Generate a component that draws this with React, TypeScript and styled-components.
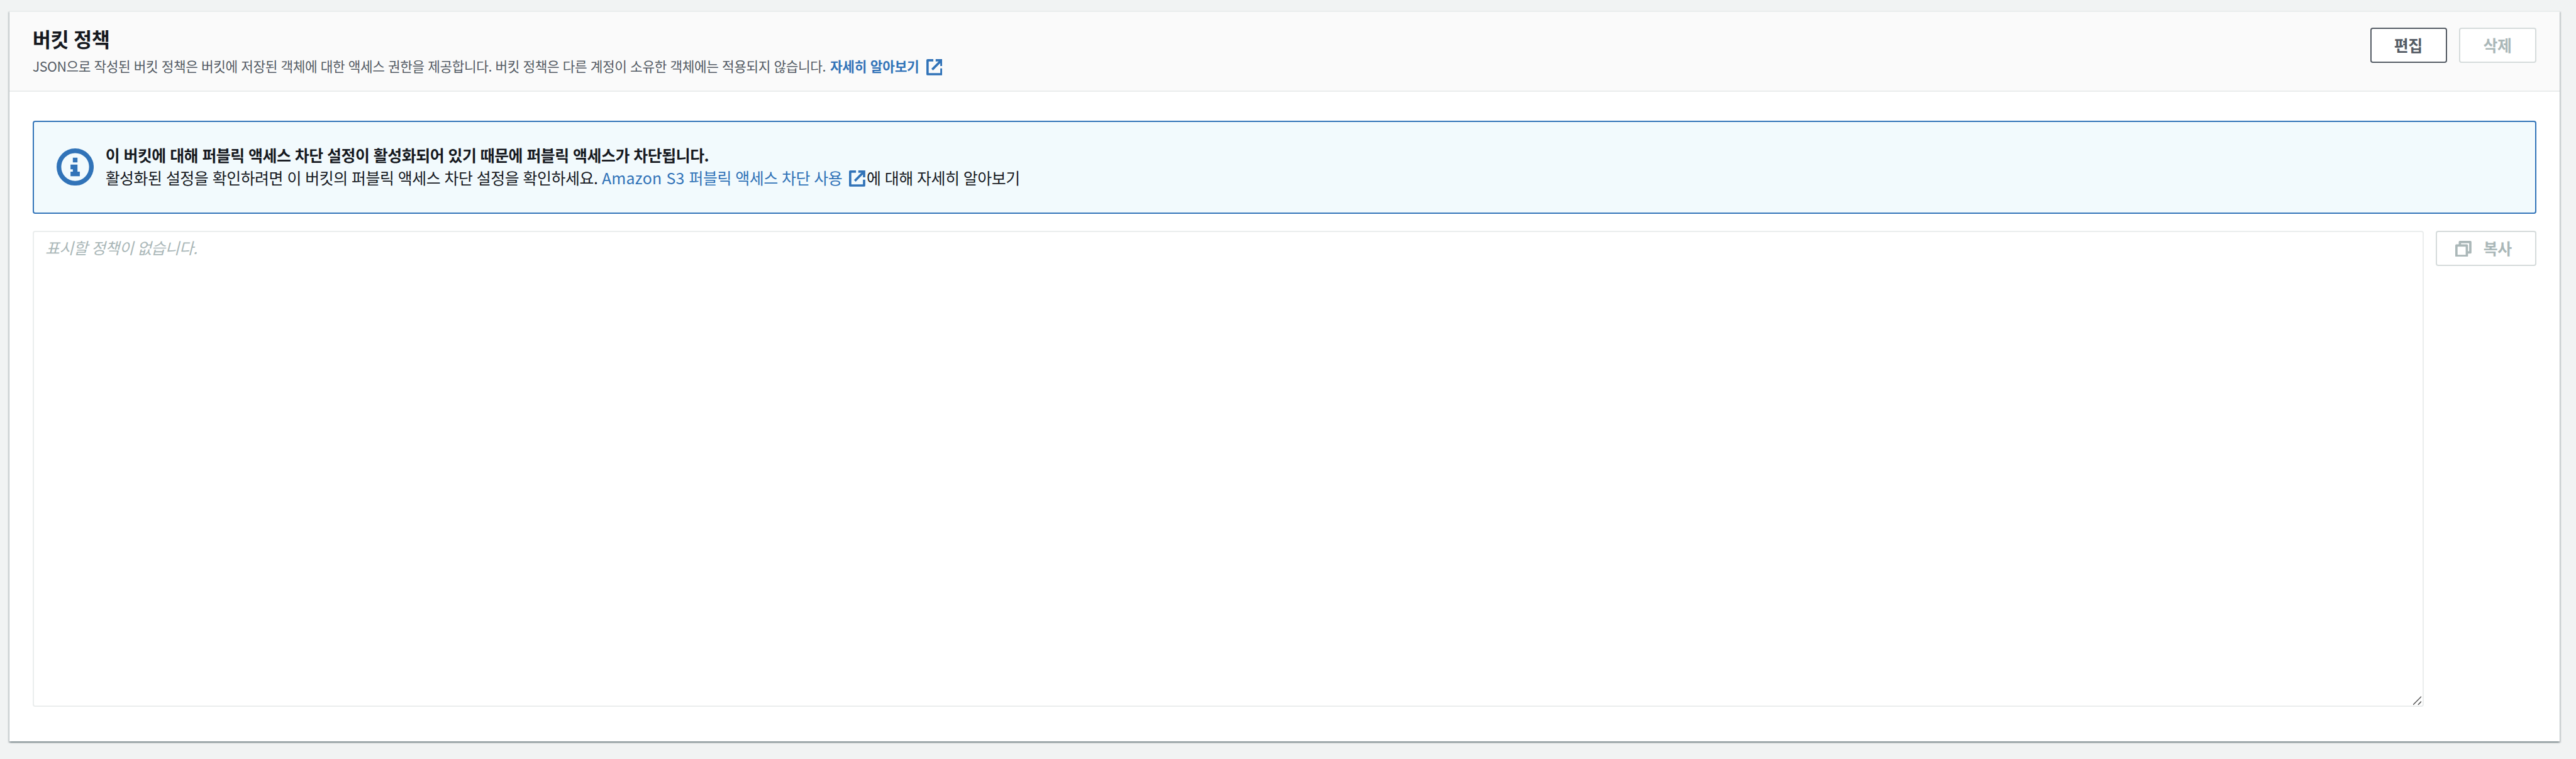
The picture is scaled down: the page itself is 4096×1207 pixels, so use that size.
import React from "react";
import styled, { createGlobalStyle, css } from "styled-components";

const SCALE = 4096 / 4440;
const u = (n: number) => `${(n * SCALE).toFixed(2)}px`;

const color = {
  page: "#f1f3f3",
  line: "#eaeded",
  text: "#16191f",
  muted: "#545b64",
  disabled: "#aab7b8",
  disabledLine: "#d5dbdb",
  link: "#3173b8",
  infoBg: "#f2fafd",
};

const GlobalStyle = createGlobalStyle`
  * { box-sizing: border-box; }
  html, body { margin: 0; background: ${color.page}; }
  body {
    font-family: "Noto Sans CJK KR", "Noto Sans", sans-serif;
    color: ${color.text};
    letter-spacing: -0.42px;
    word-spacing: 1.12px;
    white-space: nowrap;
    overflow: hidden;
  }
`;

const Page = styled.main`
  height: 1207px;
  padding: ${u(18)} ${u(28)} ${u(30)} ${u(16)};
`;

const Card = styled.section`
  height: 100%;
  display: flex;
  flex-direction: column;
  background: #fff;
  border-top: 2px solid ${color.line};
  box-shadow:
    0 2px 2px 0 rgba(0, 28, 36, 0.3),
    2px 2px 2px 0 rgba(0, 28, 36, 0.15),
    -2px 2px 2px 0 rgba(0, 28, 36, 0.15);
`;

const Header = styled.header`
  display: flex;
  justify-content: space-between;
  align-items: flex-start;
  height: ${u(138)};
  padding: ${u(24)} ${u(40)} 0;
  background: #fafafa;
  border-bottom: 2px solid ${color.line};
`;

const Title = styled.h2`
  margin: 0;
  font-size: ${u(34.4)};
  line-height: ${u(44)};
  font-weight: 700;
`;

const Description = styled.p`
  display: flex;
  align-items: center;
  margin: ${u(7.4)} 0 0;
  font-size: ${u(23.15)};
  line-height: ${u(36)};
  letter-spacing: -0.4px;
  color: ${color.muted};
`;

const Link = styled.a<{ $strong?: boolean }>`
  display: inline-flex;
  align-items: center;
  margin-left: ${(p) => (p.$strong ? u(7.6) : u(7))};
  color: ${color.link};
  font-weight: ${(p) => (p.$strong ? 700 : 400)};
  letter-spacing: ${(p) => (p.$strong ? "-0.25px" : "inherit")};
  text-decoration: none;

  svg {
    margin: ${(p) => (p.$strong ? u(4) : u(3))} 0 0 ${u(12)};
  }
`;

const Latin = styled.span`
  letter-spacing: 0.25px;
  white-space: pre;
`;

const Icon = styled.svg<{ $size: number }>`
  display: block;
  flex: none;
  width: ${(p) => u(p.$size)};
  height: ${(p) => u(p.$size)};
`;

const Actions = styled.div`
  display: flex;
  gap: ${u(20)};
  padding-top: ${u(4)};
`;

const Button = styled.button<{ $width: number; $inset: number }>`
  display: flex;
  flex: none;
  align-items: center;
  justify-content: center;
  gap: ${u(20.5)};
  width: ${(p) => u(p.$width)};
  height: ${u(60)};
  padding: 0 ${(p) => u(p.$inset)} ${u(2)} 0;
  border: 2px solid ${color.muted};
  border-radius: 4px;
  background: #fff;
  color: ${color.muted};
  font: inherit;
  font-size: ${u(27)};
  font-weight: 700;
  letter-spacing: inherit;

  svg {
    margin-top: ${u(3)};
  }

  ${(p) =>
    p.disabled &&
    css`
      border-color: ${color.disabledLine};
      color: ${color.disabled};
    `}
`;

const Body = styled.div`
  flex: 1;
  display: flex;
  flex-direction: column;
  gap: ${u(30)};
  padding: ${u(50)} ${u(40)} ${u(60)};
`;

const Alert = styled.div`
  display: flex;
  align-items: center;
  gap: ${u(20)};
  height: ${u(160)};
  padding: 0 ${u(39.6)};
  border: 2px solid ${color.link};
  border-radius: 4px;
  background: ${color.infoBg};
`;

const AlertText = styled.div`
  padding-bottom: ${u(3)};
  font-size: ${u(27)};
  line-height: ${u(40)};
`;

const AlertTitle = styled.div`
  font-weight: 700;
  letter-spacing: -0.45px;
`;

const AlertLine = styled.div`
  display: flex;
  align-items: center;
`;

const After = styled.span`
  margin-left: ${u(2)};
`;

const PolicyRow = styled.div`
  flex: 1;
  display: flex;
  align-items: flex-start;
  gap: ${u(20)};
`;

const PolicyField = styled.div`
  position: relative;
  flex: 1;
  display: flex;
  height: 100%;
`;

const PolicyBox = styled.textarea`
  flex: 1;
  height: 100%;
  margin: 0;
  padding: ${u(8)} ${u(20)};
  border: 2px solid ${color.line};
  border-radius: 4px;
  background: #fff;
  font: inherit;
  font-size: ${u(27)};
  line-height: ${u(36)};
  letter-spacing: -0.62px;
  word-spacing: inherit;
  resize: none;
  outline: none;
  &::placeholder {
    color: ${color.disabled};
    font-style: italic;
    opacity: 1;
  }
`;

const Grip = styled(Icon)`
  position: absolute;
  right: 4px;
  bottom: 3px;
`;

const ExternalIcon = () => (
  <Icon $size={28} viewBox="0 0 28 28" fill="none" stroke={color.link} strokeWidth="4">
    <path d="M12 2H2V26H26V16" strokeLinejoin="round" />
    <path d="M16 2H26V12" />
    <path d="M26 2L10 18" />
  </Icon>
);

const InfoIcon = () => (
  <Icon $size={64} viewBox="0 0 16 16">
    <circle cx="8" cy="8" r="7" fill="none" stroke={color.link} strokeWidth="2" />
    <path d="M7 4H9V6H7ZM6 7H9V10H10V12H6V10H7V9H6Z" fill={color.link} />
  </Icon>
);

const CopyIcon = () => (
  <Icon $size={28} viewBox="0 0 28 28" fill="none" stroke={color.disabled} strokeWidth="4" strokeLinejoin="round">
    <path d="M2 8H20V26H2Z" />
    <path d="M8 8V2H26V20H20" />
  </Icon>
);

export default function App() {
  return (
    <>
      <GlobalStyle />
      <Page>
        <Card>
          <Header>
            <div>
              <Title>버킷 정책</Title>
              <Description>
                <span>
                  JSON으로 작성된 버킷 정책은 버킷에 저장된 객체에 대한 액세스 권한을 제공합니다. 버킷 정책은 다른 계정이 소유한 객체에는 적용되지 않습니다.
                </span>
                <Link $strong>
                  자세히 알아보기
                  <ExternalIcon />
                </Link>
              </Description>
            </div>
            <Actions>
              <Button $width={132} $inset={2.6}>
                편집
              </Button>
              <Button $width={134} $inset={1} disabled>
                삭제
              </Button>
            </Actions>
          </Header>
          <Body>
            <Alert>
              <InfoIcon />
              <AlertText>
                <AlertTitle>
                  이 버킷에 대해 퍼블릭 액세스 차단 설정이 활성화되어 있기 때문에 퍼블릭 액세스가 차단됩니다.
                </AlertTitle>
                <AlertLine>
                  <span>활성화된 설정을 확인하려면 이 버킷의 퍼블릭 액세스 차단 설정을 확인하세요.</span>
                  <Link>
                    <Latin>Amazon S3 </Latin>
                    퍼블릭 액세스 차단 사용
                    <ExternalIcon />
                  </Link>
                  <After>에 대해 자세히 알아보기</After>
                </AlertLine>
              </AlertText>
            </Alert>
            <PolicyRow>
              <PolicyField>
                <PolicyBox readOnly placeholder="표시할 정책이 없습니다." />
                <Grip $size={15} viewBox="0 0 15 15" fill="none" stroke="#555" strokeWidth="1.6">
                  <path d="M0 15L15 0M8.5 15L15 8.5" />
                </Grip>
              </PolicyField>
              <Button $width={174} $inset={9} disabled>
                <CopyIcon />
                복사
              </Button>
            </PolicyRow>
          </Body>
        </Card>
      </Page>
    </>
  );
}
